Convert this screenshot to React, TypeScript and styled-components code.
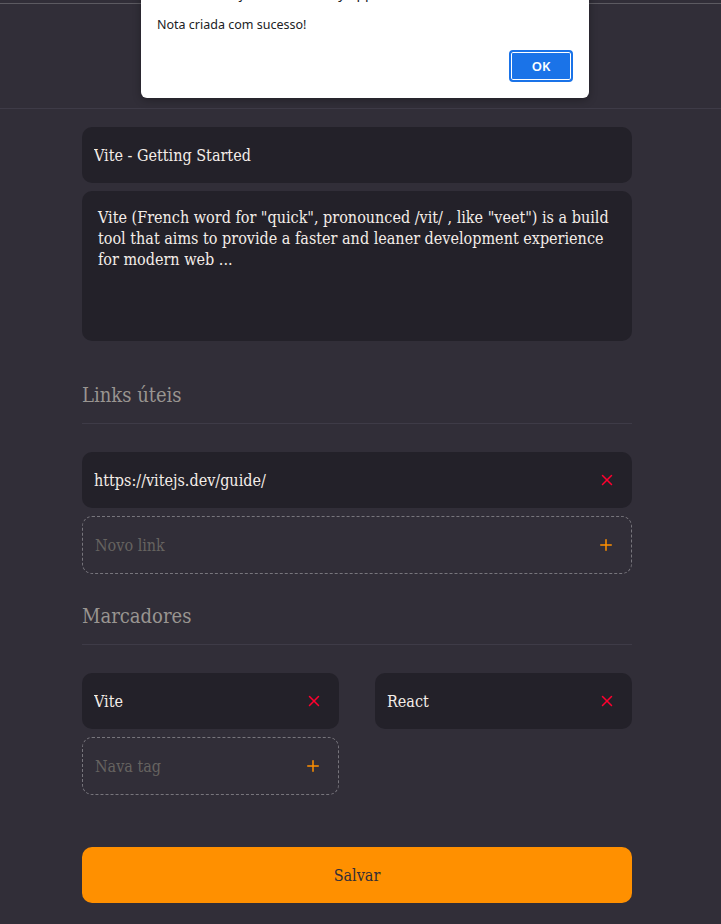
import React from "react";
import styled, { createGlobalStyle } from "styled-components";
import { FiX, FiPlus } from "react-icons/fi";

const GlobalStyle = createGlobalStyle`
   * {
      box-sizing: border-box;
   }
   body {
      margin: 0;
      background-color: #312e38;
      font-family: "DejaVu Serif", serif;
      font-stretch: condensed;
      color: #f4ede8;
   }
   input, textarea, button {
      font-family: inherit;
      font-stretch: inherit;
   }
`;

const Page = styled.div`
   min-height: 100vh;
   position: relative;
`;

const Header = styled.header`
   height: 109px;
   padding-top: 3px;
   border-bottom: 1px solid #3e3b47;
`;

const ChromeLine = styled.div`
   height: 1px;
   background-color: #5c5a61;
`;

const Content = styled.div`
   padding-right: 7px;
`;

const Main = styled.main`
   width: 550px;
   margin: 0 auto;
   padding: 18px 0 20px;
`;

const Form = styled.form`
   display: flex;
   flex-direction: column;
`;

const TitleInput = styled.input`
   height: 56px;
   width: 100%;
   padding: 0 12px;
   border: none;
   border-radius: 10px;
   background-color: #232129;
   color: #f4ede8;
   font-size: 16px;
   outline: none;
`;

const TextArea = styled.textarea`
   display: block;
   width: 100%;
   height: 150px;
   margin-top: 8px;
   padding: 16px;
   border: none;
   border-radius: 10px;
   background-color: #232129;
   color: #f4ede8;
   font-size: 16px;
   line-height: 21px;
   resize: none;
   outline: none;
`;

const Section = styled.section<{ $top: number }>`
   margin-top: ${({ $top }) => $top}px;
`;

const SectionTitle = styled.h2`
   margin: 0 0 28px;
   padding-bottom: 16px;
   border-bottom: 1px solid #3e3b47;
   color: #999591;
   font-size: 20px;
   font-weight: 400;
   line-height: 24px;
`;

const List = styled.div`
   display: flex;
   flex-direction: column;
   gap: 8px;
`;

const Tags = styled.div`
   display: grid;
   grid-template-columns: 1fr 1fr;
   column-gap: 36px;
   row-gap: 8px;
`;

const ItemBox = styled.div<{ $isNew?: boolean }>`
   display: flex;
   align-items: center;
   height: ${({ $isNew }) => ($isNew ? 58 : 56)}px;
   padding-right: 15px;
   border-radius: 10px;
   background-color: ${({ $isNew }) => ($isNew ? "transparent" : "#232129")};
   border: ${({ $isNew }) => ($isNew ? "1px dashed #77757c" : "none")};
`;

const ItemInput = styled.input`
   flex: 1;
   min-width: 0;
   height: 100%;
   padding: 0 12px;
   border: none;
   background: transparent;
   color: #f4ede8;
   font-size: 16px;
   outline: none;

   &::placeholder {
      color: #666360;
   }
`;

const IconButton = styled.button<{ $isNew?: boolean }>`
   display: flex;
   align-items: center;
   justify-content: center;
   width: 20px;
   height: 20px;
   padding: 0;
   border: none;
   background: none;
   color: ${({ $isNew }) => ($isNew ? "#ff9000" : "#ff002e")};
   cursor: pointer;
`;

const SaveButton = styled.button`
   height: 56px;
   width: 100%;
   margin-top: 52px;
   border: none;
   border-radius: 10px;
   background-color: #ff9000;
   color: #312e38;
   font-size: 16px;
   cursor: pointer;
`;

/* browser alert sitting over the page */
const Dialog = styled.div`
   position: absolute;
   top: -16px;
   left: 141px;
   width: 448px;
   padding: 0 16px 16px;
   background-color: #fff;
   border-radius: 0 0 6px 6px;
   box-shadow: 0 2px 8px rgba(0, 0, 0, 0.3);
   font-family: "Noto Sans", "Liberation Sans", sans-serif;
   font-stretch: normal;
   color: #202124;
`;

const DialogTitle = styled.div`
   font-size: 14px;
   line-height: 18px;
   height: 18px;
`;

const DialogText = styled.p`
   margin: 13px 0 0;
   font-size: 12.5px;
   line-height: 20px;
`;

const DialogFooter = styled.div`
   display: flex;
   justify-content: flex-end;
   margin-top: 15px;
`;

const OkButton = styled.button`
   width: 64px;
   height: 32px;
   border: 2px solid #1a73e8;
   border-radius: 4px;
   background-color: #1a73e8;
   box-shadow: inset 0 0 0 1px #fff;
   color: #fff;
   font-family: "Noto Sans", "Liberation Sans", sans-serif;
   font-stretch: normal;
   font-size: 13px;
   font-weight: 600;
`;

type ItemProps = {
   value?: string;
   placeholder?: string;
   isNew?: boolean;
};

function NoteItem({ value, placeholder, isNew }: ItemProps) {
   return (
      <ItemBox $isNew={isNew}>
         <ItemInput
            type="text"
            defaultValue={value}
            placeholder={placeholder}
            readOnly={!isNew}
         />
         <IconButton type="button" $isNew={isNew}>
            {isNew ? <FiPlus size={18} /> : <FiX size={18} />}
         </IconButton>
      </ItemBox>
   );
}

const description =
   'Vite (French word for "quick", pronounced /vit/ , like "veet") is a build tool that aims to provide a faster and leaner development experience for modern web ...';

export default function App() {
   return (
      <>
         <GlobalStyle />
         <Page>
            <Header>
               <ChromeLine />
            </Header>
            <Content>
               <Main>
                  <Form onSubmit={(e) => e.preventDefault()}>
                     <TitleInput defaultValue="Vite - Getting Started" />
                     <TextArea defaultValue={description} />

                     <Section $top={42}>
                        <SectionTitle>Links úteis</SectionTitle>
                        <List>
                           <NoteItem value="https://vitejs.dev/guide/" />
                           <NoteItem isNew placeholder="Novo link" />
                        </List>
                     </Section>

                     <Section $top={30}>
                        <SectionTitle>Marcadores</SectionTitle>
                        <Tags>
                           <NoteItem value="Vite" />
                           <NoteItem value="React" />
                           <NoteItem isNew placeholder="Nava tag" />
                        </Tags>
                     </Section>

                     <SaveButton type="submit">Salvar</SaveButton>
                  </Form>
               </Main>
            </Content>

            <Dialog>
               <DialogTitle>rocketnotes-jvantonio.netlify.app diz</DialogTitle>
               <DialogText>Nota criada com sucesso!</DialogText>
               <DialogFooter>
                  <OkButton type="button">OK</OkButton>
               </DialogFooter>
            </Dialog>
         </Page>
      </>
   );
}
